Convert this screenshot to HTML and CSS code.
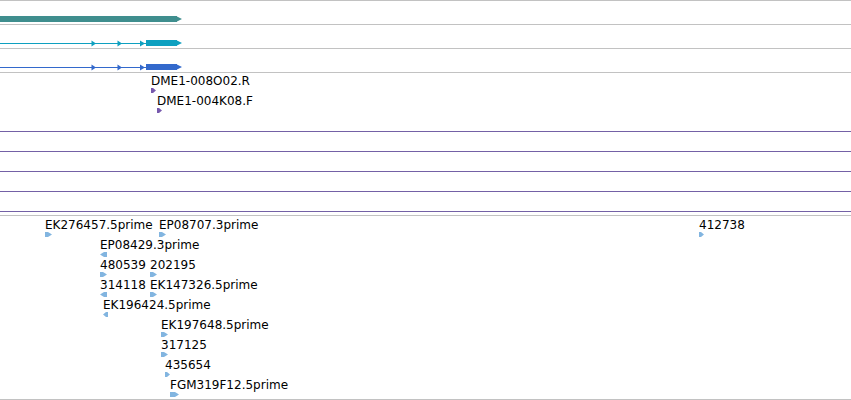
FILE: index.html
```html
<!DOCTYPE html>
<html>
<head>
<meta charset="utf-8">
<link rel="stylesheet" href="styles.css">
</head>
<body>
<div class="panel">
  <div class="track gene">
    <svg class="draw" width="851" height="23">
      <rect x="0" y="15" width="177" height="6" fill="#3f8e8e"/>
      <polygon points="176,15 182,18 176,21" fill="#3f8e8e"/>
    </svg>
  </div>
  <div class="track gene">
    <svg class="draw" width="851" height="23">
      <g fill="#0ea0c0" stroke="none">
        <rect x="0" y="18" width="148" height="1"/>
        <polygon points="91.5,15.5 96,18.5 91.5,21.5"/>
        <polygon points="117.5,15.5 122,18.5 117.5,21.5"/>
        <polygon points="140,15.5 145,18.5 140,21.5"/>
        <rect x="146" y="15" width="31" height="6"/>
        <polygon points="176,15 182,18 176,21"/>
      </g>
    </svg>
  </div>
  <div class="track gene">
    <svg class="draw" width="851" height="23">
      <g fill="#3369cc" stroke="none">
        <rect x="0" y="18" width="148" height="1"/>
        <polygon points="91.5,15.5 96,18.5 91.5,21.5"/>
        <polygon points="117.5,15.5 122,18.5 117.5,21.5"/>
        <polygon points="140,15.5 145,18.5 140,21.5"/>
        <rect x="146" y="15" width="31" height="6"/>
        <polygon points="176,15 182,18 176,21"/>
      </g>
    </svg>
  </div>
  <div class="track reads">
    <div class="feat" style="left:151px;top:2px">
      <span class="label">DME1-008O02.R</span>
      <svg class="glyph" width="6" height="5"><polygon points="0,0 2,0 5,2.5 2,5 0,5" fill="#7759ad"/></svg>
    </div>
    <div class="feat" style="left:157px;top:22px">
      <span class="label">DME1-004K08.F</span>
      <svg class="glyph" width="6" height="5"><polygon points="0,0 2,0 5,2.5 2,5 0,5" fill="#7759ad"/></svg>
    </div>
  </div>
  <div class="track empty"></div>
  <div class="track empty"></div>
  <div class="track empty"></div>
  <div class="track empty last"></div>
  <div class="track ests">
    <div class="feat" style="left:45px;top:3px">
      <span class="label">EK276457.5prime</span>
      <svg class="glyph" width="8" height="5"><polygon points="0,0 3,0 7,2.5 3,5 0,5" class="est"/></svg>
    </div>
    <div class="feat" style="left:159px;top:3px">
      <span class="label">EP08707.3prime</span>
      <svg class="glyph" width="8" height="5"><polygon points="0,0 3,0 7,2.5 3,5 0,5" class="est"/></svg>
    </div>
    <div class="feat" style="left:699px;top:3px">
      <span class="label">412738</span>
      <svg class="glyph" width="6" height="5"><polygon points="0,0 2,0 5,2.5 2,5 0,5" class="est"/></svg>
    </div>
    <div class="feat" style="left:100px;top:23px">
      <span class="label">EP08429.3prime</span>
      <svg class="glyph" width="8" height="5"><polygon points="7,0 4,0 0,2.5 4,5 7,5" class="est"/></svg>
    </div>
    <div class="feat" style="left:100px;top:43px">
      <span class="label">480539</span>
      <svg class="glyph" width="8" height="5"><polygon points="0,0 3,0 7,2.5 3,5 0,5" class="est"/></svg>
    </div>
    <div class="feat" style="left:150px;top:43px">
      <span class="label">202195</span>
      <svg class="glyph" width="8" height="5"><polygon points="0,0 3,0 7,2.5 3,5 0,5" class="est"/></svg>
    </div>
    <div class="feat" style="left:100px;top:63px">
      <span class="label">314118</span>
      <svg class="glyph" width="8" height="5"><polygon points="7,0 4,0 0,2.5 4,5 7,5" class="est"/></svg>
    </div>
    <div class="feat" style="left:150px;top:63px">
      <span class="label">EK147326.5prime</span>
      <svg class="glyph" width="8" height="5"><polygon points="0,0 3,0 7,2.5 3,5 0,5" class="est"/></svg>
    </div>
    <div class="feat" style="left:103px;top:83px">
      <span class="label">EK196424.5prime</span>
      <svg class="glyph" width="5" height="5"><polygon points="5,0 3,0 0,2.5 3,5 5,5" class="est"/></svg>
    </div>
    <div class="feat" style="left:161px;top:103px">
      <span class="label">EK197648.5prime</span>
      <svg class="glyph" width="8" height="5"><polygon points="0,0 3,0 7,2.5 3,5 0,5" class="est"/></svg>
    </div>
    <div class="feat" style="left:161px;top:123px">
      <span class="label">317125</span>
      <svg class="glyph" width="8" height="5"><polygon points="0,0 3,0 7,2.5 3,5 0,5" class="est"/></svg>
    </div>
    <div class="feat" style="left:165px;top:143px">
      <span class="label">435654</span>
      <svg class="glyph" width="6" height="5"><polygon points="0,0 2,0 5,2.5 2,5 0,5" class="est"/></svg>
    </div>
    <div class="feat" style="left:170px;top:163px">
      <span class="label">FGM319F12.5prime</span>
      <svg class="glyph" width="10" height="5"><polygon points="0,0 5,0 9,2.5 5,5 0,5" class="est"/></svg>
    </div>
  </div>
</div>
</body>
</html>
```
FILE: styles.css
```css
html, body {
  margin: 0;
  padding: 0;
  background: #ffffff;
}
body {
  width: 851px;
  height: 400px;
  overflow: hidden;
  font-family: "DejaVu Sans", sans-serif;
  font-size: 12px;
  color: #000;
}
.panel {
  display: flex;
  flex-direction: column;
  border-top: 1px solid #c2c2c2;
}
.track {
  position: relative;
  width: 851px;
}
.draw {
  display: block;
}
.gene {
  height: 23px;
  border-bottom: 1px solid #c2c2c2;
}
.reads {
  height: 58px;
  border-bottom: 1px solid #7461a6;
}
.empty {
  height: 19px;
  border-bottom: 1px solid #7461a6;
}
.empty.last {
  height: 19px;
  margin-bottom: 3px;
}
.ests {
  height: 183px;
  border-top: 1px solid #c2c2c2;
  border-bottom: 1px solid #c2c2c2;
}
.feat {
  position: absolute;
  white-space: nowrap;
}
.label {
  display: block;
  line-height: 13px;
  height: 13px;
}
.glyph {
  display: block;
}
.est {
  fill: #82b5e0;
}
```
